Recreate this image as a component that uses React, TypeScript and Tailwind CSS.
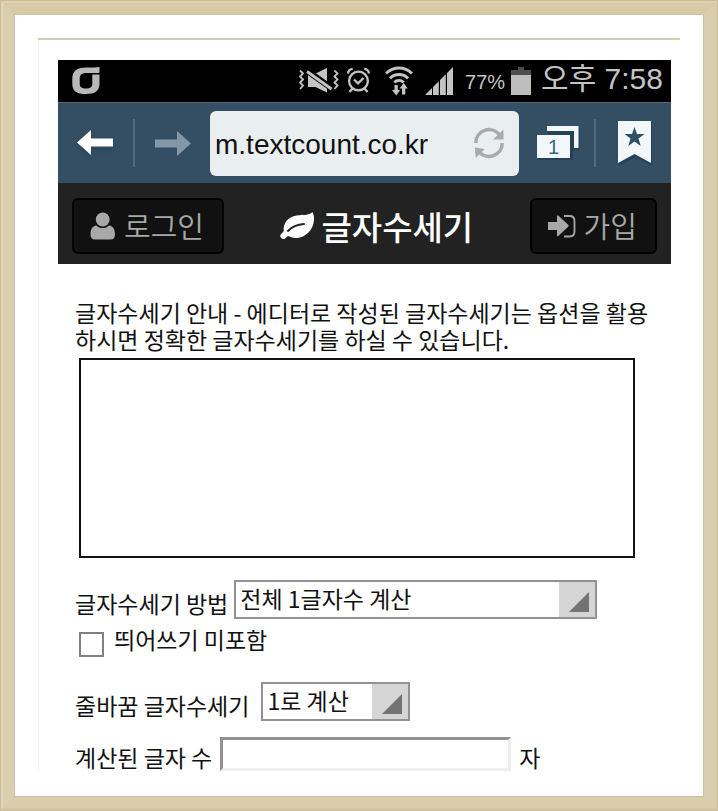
import { useState } from 'react';
import type { ReactNode } from 'react';

function CarrierLogo() {
  return (
    <svg className="h-7 w-7 shrink-0" viewBox="72 68 28 28" fill="#b9b9b9">
      <path
        fillRule="evenodd"
        d="M99.500 68v5.500l-1 .5H87c-5 0-7.300 1.500-7.300 5.500v5c0 3.600 1.800 5 6.300 5s6.300-1.400 6.300-5v-9h7.200v9c0 7.500-4.500 10.500-13.500 10.500S72.300 92.500 72.300 85v-5c0-8.500 5-11.500 14-11.500h8z"
      />
    </svg>
  );
}

function MuteIcon() {
  return (
    <svg className="h-7 w-10 shrink-0" viewBox="298 68 40 28" fill="none" stroke="#c4c4c4">
      <path strokeWidth="1.8" d="M299 71.500l3 3-3 3 3 3-3 3 3 3-3 3.500M333.500 71.500l3 3-3 3 3 3-3 3 3 3-3 3.500" />
      <path fill="#c4c4c4" stroke="none" d="M307 75.500h5.500L326 69v24.500L314.500 88H307z" />
      <path stroke="#000" strokeWidth="6" d="M305 71l26 18.500" />
      <path strokeWidth="2.800" d="M306 72.500l24.500 17.500" />
    </svg>
  );
}

function AlarmIcon() {
  return (
    <svg className="h-7 w-6 shrink-0" viewBox="347 68 24 28" fill="none" stroke="#c4c4c4" strokeWidth="2.300">
      <circle cx="358.500" cy="82" r="9.400" />
      <path d="M354 80.500l4 3.800 5.500-5.300M348 74.500c.3-2.700 2-4.300 4.700-4.600M369 74.500c-.3-2.700-2-4.300-4.700-4.600M352.500 89.500l-3 3.500M364.500 89.500l3 3.500" />
    </svg>
  );
}

function WifiIcon() {
  return (
    <svg className="h-8 w-7 shrink-0" viewBox="384 66 28 32" fill="none" stroke="#c4c4c4" strokeWidth="3">
      <path d="M385 74.500c7.500-7.300 18.500-7.300 26 0M389 79.300c5.200-5 12.800-5 18 0M393.300 83.300c2.800-2.400 6.600-2.400 9.400 0" />
      <path fill="#c4c4c4" stroke="none" d="M393.500 86h3.300v5h2.400l-4 5.500-4.200-5.500h2.500zM401 95.500h3.300v-6h2.400l-4-5.500-4.200 5.500h2.500z" />
    </svg>
  );
}

function SignalIcon() {
  return (
    <svg className="h-7 w-7 shrink-0" viewBox="423 69 28 28" fill="#c4c4c4">
      <path d="M423 97l7-7V97zM431 89l5.800-5.800V97H431zM438 82l5.800-5.800V97H438zM445 75l6-6v28h-6z" />
    </svg>
  );
}

function BatteryIcon() {
  return (
    <svg className="h-7 w-5 shrink-0" viewBox="0 0 20 28">
      <path fill="#4d4d4d" d="M7 0h6v3h7v6H0V3h7z" />
      <path fill="#bdbdbd" d="M0 8h20v20H0z" />
    </svg>
  );
}

function StatusBar() {
  return (
    <div className="flex h-[42px] items-center bg-black pr-2 pl-3.5 text-[#c4c4c4]">
      <CarrierLogo />
      <div className="ml-auto flex items-center">
        <MuteIcon />
        <span className="w-2" />
        <AlarmIcon />
        <span className="w-3.5" />
        <WifiIcon />
        <span className="w-3" />
        <SignalIcon />
        <div className="flex items-center pl-3">
          <span className="pt-0.5 text-xl">77%</span>
          <span className="pr-2.5 pl-1.5">
            <BatteryIcon />
          </span>
          <span className="pb-1 text-[30px] leading-8 whitespace-nowrap">오후 7:58</span>
        </div>
      </div>
    </div>
  );
}

function ArrowIcon({ className }: { className: string }) {
  return (
    <svg className={className} viewBox="0 0 36 26" fill="currentColor">
      <path d="M0 12.500L14 0v8.500h22v8H14V25z" />
    </svg>
  );
}

function ReloadIcon() {
  return (
    <svg className="size-8" viewBox="473 127 32 32" fill="none" stroke="#a9abab" strokeWidth="3.600">
      <path d="M475.800 143a13.200 13.200 0 0 1 23.500-8.400M502.200 143a13.200 13.200 0 0 1-23.500 8.400" />
      <path fill="#a9abab" stroke="none" d="M503.500 129.500v10H493zM474.800 147.500l10 1.500-9 9z" />
    </svg>
  );
}

function TabsIcon() {
  return (
    <svg className="h-9 w-11" viewBox="536 127 44 36">
      <path fill="#1d3a50" opacity=".6" d="M548 130h31.500v22H573v10h-35v-20h10z" />
      <path fill="#f2f7fa" d="M547 128h31.500v22H574v-17h-27z" />
      <path fill="#f2f7fa" d="M537 137h33v23h-33z" />
      <text x="553.500" y="155.500" textAnchor="middle" fontSize="20" fill="#3d6580">
        1
      </text>
    </svg>
  );
}

function BookmarkIcon() {
  return (
    <svg className="h-11 w-9" viewBox="617 123 36 44">
      <path fill="#1d3a50" opacity=".6" d="M619 124h33v44l-16.500-9-16.500 9z" />
      <path fill="#f2f7fa" d="M618 123h33v42l-16.500-9-16.500 9z" />
      <path fill="#2f4f68" d="M634.500 129l2.500 7h7.500l-6 4.600 2.200 7.400-6.200-4.400-6.200 4.400 2.200-7.400-6-4.600h7.500z" />
    </svg>
  );
}

function BrowserBar() {
  return (
    <div className="flex h-[81px] items-center border-t border-[#56697a] bg-[#344e64]">
      <button type="button" aria-label="뒤로" className="ml-[19px] text-white drop-shadow-md">
        <ArrowIcon className="h-[26px] w-9" />
      </button>
      <span className="ml-5 h-12 w-0.5 bg-[#526b7f]" />
      <button type="button" aria-label="앞으로" className="ml-5 text-[#8497a5]">
        <ArrowIcon className="h-[26px] w-9 rotate-180" />
      </button>
      <div className="ml-[19px] flex h-[65px] min-w-0 flex-1 items-center rounded-md bg-[#e9eef0] pr-3.5 pl-[5px]">
        <input
          type="text"
          aria-label="주소"
          defaultValue="m.textcount.co.kr"
          className="min-w-0 flex-1 bg-transparent pt-1 text-[28px] text-[#111] outline-none"
        />
        <button type="button" aria-label="새로고침">
          <ReloadIcon />
        </button>
      </div>
      <button type="button" aria-label="탭" className="ml-[17px]">
        <TabsIcon />
      </button>
      <span className="ml-3.5 h-12 w-0.5 bg-[#526b7f]" />
      <button type="button" aria-label="북마크" className="mr-[18px] ml-[21px]">
        <BookmarkIcon />
      </button>
    </div>
  );
}

function UserIcon() {
  return (
    <svg className="h-7 w-[26px]" viewBox="90 212 26 28" fill="currentColor">
      <circle cx="102.700" cy="219.500" r="6.900" />
      <path d="M96.300 225.500c3.700 3.400 9.100 3.400 12.800 0 4 .5 5.900 4 5.900 9 0 3-1.500 5-4.500 5H95c-3 0-4.500-2-4.500-5 0-5 1.800-8.500 5.800-9z" />
    </svg>
  );
}

function SignInIcon() {
  return (
    <svg className="h-7 w-7" viewBox="548 212.500 28 28" fill="currentColor">
      <path d="M548 222.500h9v-5.500q0-2 1.500-.7l9.700 9q1 1 0 2l-9.700 9q-1.500 1.300-1.500-.7V230.500h-9z" />
      <path fill="none" stroke="currentColor" strokeWidth="1.800" d="M564 216.500h5.500q5 0 5 5v10.500q0 5-5 5H564" />
    </svg>
  );
}

function LeafIcon() {
  return (
    <svg className="h-7 w-[35px]" viewBox="281 210 35 28">
      <path
        fill="#fff"
        d="M313.500 210c1.200 2.500 1.700 5 1.500 8-.7 10.500-9 17.500-17 18-4.500.200-7-1.300-9-2-1.500.700-2.500 3-4.500 3-1.700 0-3.300-1.500-3.300-3 0-2 2.800-3.500 3.500-5-.700-8 4-14 13-15.500 6-1 11.800.500 15.800-3.500z"
      />
      <path fill="none" stroke="#222" strokeWidth="2" strokeLinecap="round" d="M289 229c4-4.500 8-6.500 16-7" />
    </svg>
  );
}

function HeaderLink({ children }: { children: ReactNode }) {
  return (
    <a
      href="#"
      className="flex h-14 items-center gap-2 rounded-md border-2 border-black bg-[#111] pr-[18px] pl-4 text-[29px] font-[350] whitespace-nowrap text-[#a8a8a8]"
    >
      {children}
    </a>
  );
}

function SiteHeader() {
  return (
    <header className="flex h-[81px] items-center justify-between bg-[#222] px-3.5 pt-1">
      <HeaderLink>
        <UserIcon />
        로그인
      </HeaderLink>
      <h1 className="flex items-center gap-1.5 text-[33px] leading-10 font-medium whitespace-nowrap text-white">
        <LeafIcon />
        글자수세기
      </h1>
      <HeaderLink>
        <SignInIcon />
        가입
      </HeaderLink>
    </header>
  );
}

function SelectBox({ id, options, className }: { id: string; options: string[]; className: string }) {
  return (
    <div className={`grid h-[39px] border-2 border-[#929292] ${className}`}>
      <select id={id} className="col-start-1 row-start-1 h-full w-full appearance-none bg-white pr-9 pb-0.5 pl-1 outline-none">
        {options.map((option) => (
          <option key={option}>{option}</option>
        ))}
      </select>
      <span className="pointer-events-none col-start-1 row-start-1 flex h-full w-9 items-center justify-center justify-self-end bg-[#d5d5d5] pt-1 pl-1">
        <svg className="size-5" viewBox="0 0 20 20" fill="#737373">
          <path d="M20 0v20H0z" />
        </svg>
      </span>
    </div>
  );
}

function CountForm() {
  const [text, setText] = useState('');
  const [skipSpaces, setSkipSpaces] = useState(false);

  return (
    <form className="pt-[35px] pl-[17px] text-[23px] leading-[27px] text-[#111]">
      <label htmlFor="content" className="block pr-3">
        글자수세기 안내 - 에디터로 작성된 글자수세기는 옵션을 활용하시면 정확한 글자수세기를 하실 수 있습니다.
      </label>
      <div className="mt-[5px] mr-9 ml-1">
        <textarea
          id="content"
          value={text}
          onChange={(e) => setText(e.target.value)}
          className="block h-[200px] w-full resize-none border-2 border-[#111] p-1 outline-none"
        />
      </div>

      <div className="mt-[22px] flex items-end gap-1.5">
        <label htmlFor="method" className="pb-0.5 whitespace-nowrap">글자수세기 방법</label>
        <SelectBox id="method" options={['전체 1글자수 계산', '한글 2글자수 계산']} className="w-[363px]" />
      </div>
      <div className="mt-[7px] flex items-start gap-2.5 pl-1">
        <input
          id="skip-spaces"
          type="checkbox"
          checked={skipSpaces}
          onChange={(e) => setSkipSpaces(e.target.checked)}
          className="mt-1.5 size-[25px] appearance-none border-2 border-[#808080] bg-white checked:bg-[#808080]"
        />
        <label htmlFor="skip-spaces">띄어쓰기 미포함</label>
      </div>

      <div className="mt-[25px] flex items-end gap-3">
        <label htmlFor="newline" className="pb-0.5 whitespace-nowrap">줄바꿈 글자수세기</label>
        <SelectBox id="newline" options={['1로 계산', '2로 계산']} className="w-[149px]" />
      </div>
      <div className="mt-4 flex items-end gap-2">
        <label htmlFor="result" className="whitespace-nowrap">계산된 글자 수</label>
        <input
          id="result"
          type="text"
          readOnly
          className="h-[34px] w-[291px] border-3 border-t-[#929292] border-r-[#eeeeee] border-b-[#eeeeee] border-l-[#929292] px-1 outline-none"
        />
        <span>자</span>
      </div>
    </form>
  );
}

export default function App() {
  return (
    <div className="border border-[#c9bd99] bg-white font-['Liberation_Sans','Noto_Sans_CJK_KR',sans-serif]">
      <div className="border-2 border-t-[#ddd1b0] border-r-[#d8cca9] border-b-[#d3c7a3] border-l-[#e0d5b6]">
        <div className="border-[11px] border-t-[#d8caa7] border-r-[#d9ceae] border-b-[#dacdab] border-l-[#dacfaf]">
          <div className="border border-[#cbc0a0] px-[23px] pt-[23px] pb-[25px]">
            <div className="border-t-2 border-t-[#d3ccb6]">
              <div className="border-l border-[#f5f3ec] pt-5 pr-[9px] pl-[19px]">
                <StatusBar />
                <BrowserBar />
                <div className="font-['Noto_Sans_CJK_KR',sans-serif]">
                  <SiteHeader />
                  <CountForm />
                </div>
              </div>
            </div>
          </div>
        </div>
      </div>
    </div>
  );
}
